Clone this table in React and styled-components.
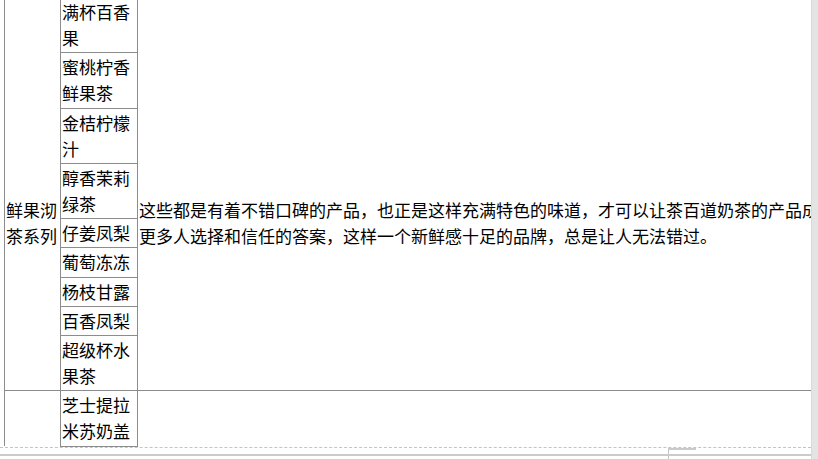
import styled, { createGlobalStyle } from "styled-components";

const DRINKS = [
  "满杯百香果",
  "蜜桃柠香鲜果茶",
  "金桔柠檬汁",
  "醇香茉莉绿茶",
  "仔姜凤梨",
  "葡萄冻冻",
  "杨枝甘露",
  "百香凤梨",
  "超级杯水果茶",
];

const NOTE =
  "这些都是有着不错口碑的产品，也正是这样充满特色的味道，才可以让茶百道奶茶的产品成为更多人选择和信任的答案，这样一个新鲜感十足的品牌，总是让人无法错过。";

const GlobalStyle = createGlobalStyle`
  html, body {
    margin: 0;
    padding: 0;
    height: 100%;
    overflow: hidden;
    background: #fff;
  }
  body {
    font-family: "Noto Sans CJK SC", "Noto Sans", sans-serif;
    color: #000;
  }
`;

const Screen = styled.div`
  display: flex;
  height: 100vh;
`;

const Viewport = styled.div`
  flex: 1;
  min-width: 0;
  display: flex;
  flex-direction: column;
  overflow: hidden;
`;

const Sheet = styled.div`
  padding-left: 4px;
  margin-top: -3px;
`;

const Table = styled.table`
  border-collapse: collapse;
  table-layout: fixed;
  width: 843px;
  font-size: 17px;
  line-height: 26px;
`;

const Col = styled.col`
  width: ${(p) => p.$w}px;
`;

const Cell = styled.td`
  padding: ${(p) => (p.$tall ? "58px 1px 1px" : "1px 1px 1.25px")};
  vertical-align: ${(p) => (p.$tall ? "middle" : "top")};
  border: 1px solid #8c8c8c;
  border-bottom: ${(p) => (p.$open ? "none" : "1px solid #8c8c8c")};
  word-break: break-all;
`;

const PageBreak = styled.div`
  border-top: 1px dashed #c4c4c4;
`;

const Ruler = styled.div`
  flex: 1;
  background:
    linear-gradient(#c9c9c9, #c9c9c9) 668px 0 / 28px 2px no-repeat,
    linear-gradient(#cbcbcb, #cbcbcb) 0 6px / 100% 2px no-repeat,
    linear-gradient(#c4c4c4, #c4c4c4) 668px 0 / 1px 100% no-repeat;
`;

const Scrollbar = styled.div`
  width: 6px;
  flex-shrink: 0;
  background: #e4e4e4;
  border-left: 1px solid #d9d9d9;
`;

export default function App() {
  return (
    <>
      <GlobalStyle />
      <Screen>
        <Viewport>
          <Sheet>
            <Table>
              <colgroup>
                <Col $w={56} />
                <Col $w={77} />
                <Col $w={710} />
              </colgroup>
              <tbody>
                {DRINKS.map((name, i) => (
                  <tr key={name}>
                    {i === 0 && (
                      <Cell $tall rowSpan={DRINKS.length}>
                        鲜果沏茶系列
                      </Cell>
                    )}
                    <Cell>{name}</Cell>
                    {i === 0 && (
                      <Cell $tall rowSpan={DRINKS.length}>
                        {NOTE}
                      </Cell>
                    )}
                  </tr>
                ))}
                <tr>
                  <Cell $open />
                  <Cell>芝士提拉米苏奶盖</Cell>
                  <Cell $open />
                </tr>
              </tbody>
            </Table>
          </Sheet>
          <PageBreak />
          <Ruler />
        </Viewport>
        <Scrollbar />
      </Screen>
    </>
  );
}
